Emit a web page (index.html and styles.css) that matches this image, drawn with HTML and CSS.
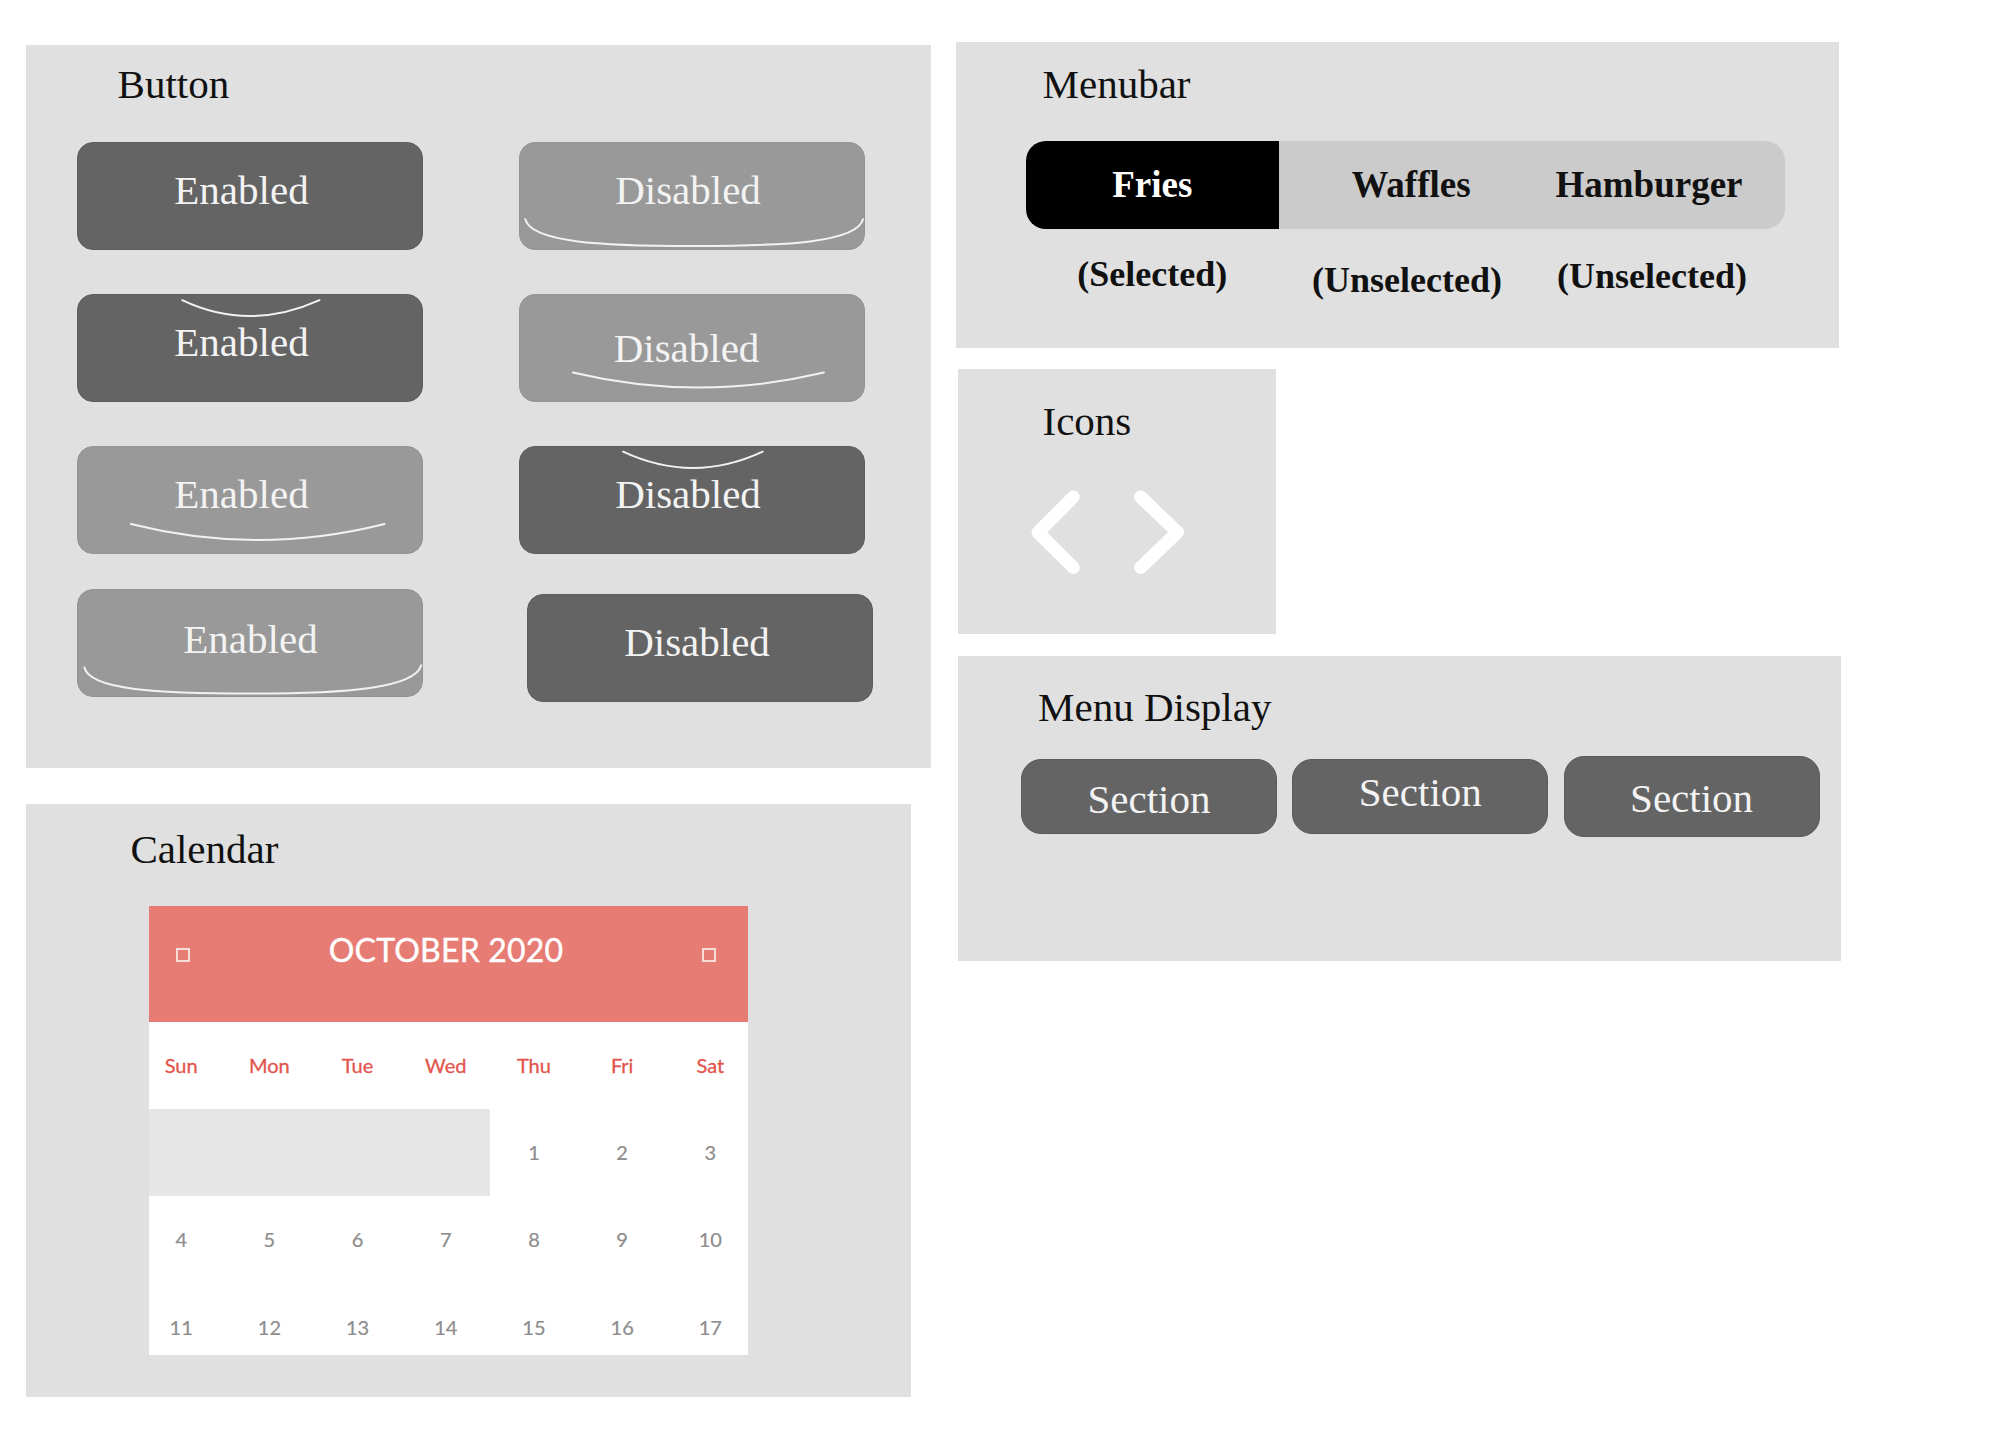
FILE: index.html
```html
<!DOCTYPE html>
<html lang="en">
<head>
<meta charset="utf-8">
<title>UI Components</title>
<link rel="stylesheet" href="styles.css">
</head>
<body>
<div class="page">
  <div class="col col-left">
    <section class="panel panel-button">
      <h2 class="panel-title title-button">Button</h2>
      <div class="btn-row row-1">
        <div class="btn btn-dark pr-16">Enabled</div>
        <div class="btn btn-light pr-7">Disabled
          <svg class="arc" viewBox="0 0 346 108"><path d="M6.3,77.3 C12,100 80,104 175,104 C270,104 338,100 344,77.3"/></svg>
        </div>
      </div>
      <div class="btn-row row-2">
        <div class="btn btn-dark pr-16">Enabled
          <svg class="arc" viewBox="0 0 346 108"><path d="M105.2,6.2 Q172,38 242.5,6.2"/></svg>
        </div>
        <div class="btn btn-light pr-10 low">Disabled
          <svg class="arc" viewBox="0 0 346 108"><path d="M53.9,78.5 Q179.4,108.5 304.9,78.5"/></svg>
        </div>
      </div>
      <div class="btn-row row-3">
        <div class="btn btn-light pr-16">Enabled
          <svg class="arc" viewBox="0 0 346 108"><path d="M53.9,78 Q180.7,110 307.5,78"/></svg>
        </div>
        <div class="btn btn-dark pr-7">Disabled
          <svg class="arc" viewBox="0 0 346 108"><path d="M104.1,5.7 Q173.9,38.3 243.7,5.7"/></svg>
        </div>
      </div>
      <div class="btn-row row-4">
        <div class="btn btn-light pl-2 mid">Enabled
          <svg class="arc" viewBox="0 0 346 108"><path d="M7.4,78.5 C13,101 80,104.5 175,104.5 C270,104.5 338,99 344.2,76.2"/></svg>
        </div>
        <div class="btn btn-dark pr-5 shifted">Disabled</div>
      </div>
    </section>

    <section class="panel panel-calendar">
      <h2 class="panel-title title-calendar">Calendar</h2>
      <div class="calendar">
        <div class="cal-head">
          <span class="tofu"></span>
          <span class="cal-month">OCTOBER 2020</span>
          <span class="tofu"></span>
        </div>
        <div class="cal-grid cal-weekdays">
          <span>Sun</span><span>Mon</span><span>Tue</span><span>Wed</span><span>Thu</span><span>Fri</span><span>Sat</span>
        </div>
        <div class="cal-grid cal-days">
          <span class="cal-empty"></span>
          <span>1</span><span>2</span><span>3</span>
          <span>4</span><span>5</span><span>6</span><span>7</span><span>8</span><span>9</span><span>10</span>
          <span>11</span><span>12</span><span>13</span><span>14</span><span>15</span><span>16</span><span>17</span>
        </div>
      </div>
    </section>
  </div>

  <div class="col col-right">
    <section class="panel panel-menubar">
      <h2 class="panel-title title-menubar">Menubar</h2>
      <div class="menubar">
        <div class="seg seg-fries seg-selected">Fries</div>
        <div class="seg seg-waffles">Waffles</div>
        <div class="seg seg-hamburger">Hamburger</div>
      </div>
      <div class="menubar-labels">
        <div class="lbl seg-fries">(Selected)</div>
        <div class="lbl seg-waffles lbl-2">(Unselected)</div>
        <div class="lbl seg-hamburger lbl-3">(Unselected)</div>
      </div>
    </section>

    <section class="panel panel-icons">
      <h2 class="panel-title title-icons">Icons</h2>
      <svg class="chevrons" viewBox="0 0 165 97" width="165" height="97">
        <polyline points="48.3,13 13,48.3 48.3,83.5"/>
        <polyline points="115.7,13 152.5,48.3 115.7,83.5"/>
      </svg>
    </section>

    <section class="panel panel-menu">
      <h2 class="panel-title title-menu">Menu Display</h2>
      <div class="sections">
        <div class="section-btn sb-1">Section</div>
        <div class="section-btn sb-2">Section</div>
        <div class="section-btn sb-3">Section</div>
      </div>
    </section>
  </div>
</div>
</body>
</html>
```

FILE: styles.css
```css
* { box-sizing: border-box; }

html, body {
  margin: 0;
  padding: 0;
  background: #ffffff;
}

body {
  font-family: "Liberation Serif", "Times New Roman", serif;
  color: #111111;
}

.page {
  display: flex;
  align-items: flex-start;
  padding-left: 26px;
  min-height: 1454px;
}

.col {
  display: flex;
  flex-direction: column;
  align-items: flex-start;
}

.col-left {
  margin-top: 45px;
  width: 905px;
}

.col-right {
  margin-top: 42px;
  margin-left: 25px;
}

.panel {
  background: #e0e0e0;
  display: flex;
  flex-direction: column;
  align-items: flex-start;
}

.panel-title {
  margin: 0;
  font-weight: normal;
  font-size: 41px;
  line-height: 41px;
  color: #111111;
  white-space: nowrap;
}

/* ---------- Button panel ---------- */
.panel-button {
  width: 905px;
  height: 723px;
}

.title-button {
  margin: 18.7px 0 0 91.6px;
}

.btn-row {
  display: flex;
  align-items: flex-start;
  gap: 96px;
  margin-left: 50.5px;
}

.row-1 { margin-top: 37.3px; }
.row-2 { margin-top: 44px; }
.row-3 { margin-top: 44px; }
.row-4 { margin-top: 35px; }

.btn {
  position: relative;
  width: 346px;
  height: 108px;
  border-radius: 16px;
  font-size: 41px;
  line-height: 41px;
  padding-top: 26.7px;
  text-align: center;
  color: #f3f3f3;
  white-space: nowrap;
}

.btn-dark {
  background: #646464;
  border: 1px solid #5e5e5e;
}

.btn-light {
  background: #999999;
  border: 1px solid #939393;
}

.pr-16 { padding-right: 16px; }
.pr-10 { padding-right: 10px; }
.pr-7 { padding-right: 7px; }
.pr-5 { padding-right: 5px; }
.pl-2 { padding-left: 2px; }

.low { padding-top: 33px; }
.mid { padding-top: 29.4px; }

.shifted {
  margin-left: 8px;
  margin-top: 5px;
}

.arc {
  position: absolute;
  left: -1px;
  top: -1px;
  width: 346px;
  height: 108px;
  overflow: visible;
  pointer-events: none;
}

.arc path {
  fill: none;
  stroke: #f2f2f2;
  stroke-width: 2;
  stroke-linecap: round;
}

/* ---------- Calendar panel ---------- */
.panel-calendar {
  margin-top: 36px;
  width: 885px;
  height: 593px;
}

.title-calendar {
  margin: 24.7px 0 0 104.4px;
}

.calendar {
  margin: 36.3px 0 0 122.8px;
  width: 599px;
  height: 449px;
  background: #ffffff;
  overflow: hidden;
  font-family: Lato, "Open Sans", sans-serif;
}

.cal-head {
  height: 116px;
  background: #e67c74;
  display: flex;
  align-items: baseline;
  justify-content: space-between;
  padding: 28px 31.7px 0 27.2px;
}

.cal-month {
  font-size: 32px;
  line-height: 32px;
  color: #ffffff;
  letter-spacing: 0.2px;
  -webkit-text-stroke: 0.4px #ffffff;
}

.tofu {
  display: inline-block;
  width: 14px;
  height: 14px;
  border: 2px solid #f8dcd8;
}

.cal-grid {
  display: grid;
  grid-template-columns: repeat(7, 88.2px);
  width: 617.4px;
  margin-left: -11.7px;
  text-align: center;
  font-size: 20px;
}

.cal-weekdays {
  height: 87px;
  line-height: 87px;
  color: #e2544c;
  -webkit-text-stroke: 0.3px #e2544c;
}

.cal-days {
  grid-auto-rows: 87.5px;
  line-height: 87.5px;
  color: #8d8d8d;
  -webkit-text-stroke: 0.2px #8d8d8d;
}

.cal-empty {
  grid-column: span 4;
  background: #e6e6e6;
}

/* ---------- Menubar panel ---------- */
.panel-menubar {
  width: 883px;
  height: 306px;
}

.title-menubar {
  margin: 21.7px 0 0 86.5px;
}

.menubar {
  margin: 36.3px 0 0 69.7px;
  width: 759.3px;
  height: 88px;
  border-radius: 20px;
  background: #cbcbcb;
  overflow: hidden;
  display: flex;
}

.seg {
  height: 88px;
  font-weight: bold;
  font-size: 37px;
  line-height: 88px;
  text-align: center;
  color: #111111;
  white-space: nowrap;
}

.seg-selected {
  background: #000000;
  color: #ffffff;
}

.seg-fries { width: 253.3px; }
.seg-waffles { width: 264px; }
.seg-hamburger { width: 212px; }

.menubar-labels {
  display: flex;
  align-items: flex-start;
  margin: 26.9px 0 0 69.7px;
}

.lbl {
  font-weight: bold;
  font-size: 36px;
  line-height: 36px;
  text-align: center;
  white-space: nowrap;
  color: #111111;
}

.lbl-2 {
  margin-top: 5.7px;
  padding-right: 8px;
}

.lbl-3 {
  margin-top: 2.3px;
  padding-left: 6px;
}

/* ---------- Icons panel ---------- */
.panel-icons {
  margin-top: 20.5px;
  margin-left: 2px;
  width: 318px;
  height: 265px;
}

.title-icons {
  margin: 32.3px 0 0 84.5px;
}

.chevrons {
  margin: 42.7px 0 0 67px;
  display: block;
}

.chevrons polyline {
  fill: none;
  stroke: #ffffff;
  stroke-width: 13;
  stroke-linecap: round;
  stroke-linejoin: round;
}

/* ---------- Menu Display panel ---------- */
.panel-menu {
  margin-top: 22px;
  margin-left: 2px;
  width: 883px;
  height: 305px;
}

.title-menu {
  margin: 31.4px 0 0 80px;
}

.sections {
  display: flex;
  align-items: flex-start;
  gap: 15.3px;
  margin: 28.3px 0 0 63px;
}

.section-btn {
  width: 256px;
  background: #646464;
  border: 1px solid #5a5a5a;
  border-radius: 20px;
  color: #f3f3f3;
  font-size: 41px;
  line-height: 41px;
  text-align: center;
  white-space: nowrap;
}

.sb-1 {
  margin-top: 3.3px;
  height: 75px;
  padding-top: 19px;
}

.sb-2 {
  margin-top: 3.3px;
  height: 74.3px;
  padding-top: 11.7px;
}

.sb-3 {
  height: 81px;
  padding-top: 20.7px;
}
```
